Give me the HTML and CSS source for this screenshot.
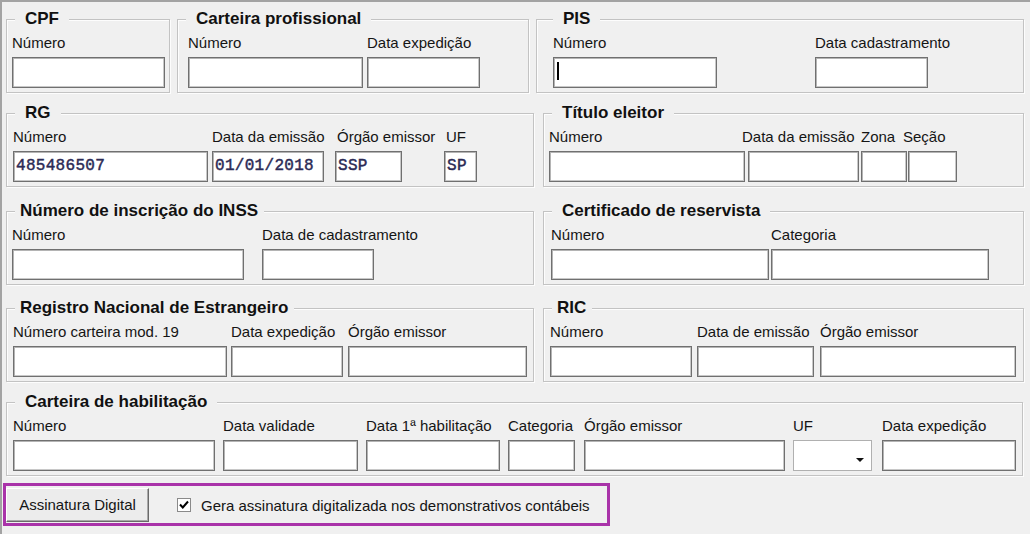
FILE: index.html
```html
<!DOCTYPE html>
<html lang="pt-BR">
<head>
<meta charset="utf-8">
<title>Documentos</title>
<link rel="stylesheet" href="styles.css">
</head>
<body>
<div class="frame">
  <div class="row row-1">
    <section class="group">
      <h3 class="title">CPF</h3>
      <div class="fields">
        <div class="field ml5 w153"><label>Número</label><div class="tb"></div></div>
      </div>
    </section>
    <section class="group">
      <h3 class="title">Carteira profissional</h3>
      <div class="fields">
        <div class="field ml10 w175"><label>Número</label><div class="tb"></div></div>
        <div class="field ml4 w113"><label>Data expedição</label><div class="tb"></div></div>
      </div>
    </section>
    <section class="group">
      <h3 class="title title-pis">PIS</h3>
      <div class="fields">
        <div class="field ml16 w164"><label>Número</label><div class="tb"><span class="caret"></span></div></div>
        <div class="field ml98 w113"><label>Data cadastramento</label><div class="tb"></div></div>
      </div>
    </section>
  </div>

  <div class="row row-2">
    <section class="group">
      <h3 class="title">RG</h3>
      <div class="fields">
        <div class="field ml6 w195"><label>Número</label><div class="tb val">485486507</div></div>
        <div class="field ml4 w112"><label>Data da emissão</label><div class="tb val">01/01/2018</div></div>
        <div class="field ml11 w67"><label class="lp2">Órgão emissor</label><div class="tb val">SSP</div></div>
        <div class="field ml42 w33"><label class="lp2">UF</label><div class="tb val">SP</div></div>
      </div>
    </section>
    <section class="group">
      <h3 class="title">Título eleitor</h3>
      <div class="fields">
        <div class="field ml5 w196"><label>Número</label><div class="tb"></div></div>
        <div class="field ml3 w111"><label class="ls6">Data da emissão</label><div class="tb"></div></div>
        <div class="field ml2 w46"><label>Zona</label><div class="tb"></div></div>
        <div class="field ml1 w49"><label class="ls5">Seção</label><div class="tb"></div></div>
      </div>
    </section>
  </div>

  <div class="row row-3">
    <section class="group">
      <h3 class="title tight">Número de inscrição do INSS</h3>
      <div class="fields">
        <div class="field ml5 w232"><label>Número</label><div class="tb"></div></div>
        <div class="field ml18 w112"><label>Data de cadastramento</label><div class="tb"></div></div>
      </div>
    </section>
    <section class="group">
      <h3 class="title">Certificado de reservista</h3>
      <div class="fields">
        <div class="field ml7 w218"><label>Número</label><div class="tb"></div></div>
        <div class="field ml2 w218"><label>Categoria</label><div class="tb"></div></div>
      </div>
    </section>
  </div>

  <div class="row row-4">
    <section class="group">
      <h3 class="title tight">Registro Nacional de Estrangeiro</h3>
      <div class="fields">
        <div class="field ml6 w214"><label>Número carteira mod. 19</label><div class="tb"></div></div>
        <div class="field ml4 w112"><label>Data expedição</label><div class="tb"></div></div>
        <div class="field ml5 w179"><label>Órgão emissor</label><div class="tb"></div></div>
      </div>
    </section>
    <section class="group">
      <h3 class="title tight">RIC</h3>
      <div class="fields">
        <div class="field ml6 w142"><label>Número</label><div class="tb"></div></div>
        <div class="field ml5 w117"><label>Data de emissão</label><div class="tb"></div></div>
        <div class="field ml6 w196"><label>Órgão emissor</label><div class="tb"></div></div>
      </div>
    </section>
  </div>

  <div class="row row-5">
    <section class="group">
      <h3 class="title">Carteira de habilitação</h3>
      <div class="fields">
        <div class="field ml6 w202"><label>Número</label><div class="tb"></div></div>
        <div class="field ml8 w135"><label>Data validade</label><div class="tb"></div></div>
        <div class="field ml8 w134"><label>Data 1ª habilitação</label><div class="tb"></div></div>
        <div class="field ml8 w67"><label>Categoria</label><div class="tb"></div></div>
        <div class="field ml9 w201"><label>Órgão emissor</label><div class="tb"></div></div>
        <div class="field ml8 w79"><label>UF</label><div class="sel"><span class="arrow"></span></div></div>
        <div class="field ml10 w134"><label>Data expedição</label><div class="tb"></div></div>
      </div>
    </section>
  </div>

  <div class="sign">
    <div class="btn">Assinatura Digital</div>
    <div class="check">
      <span class="cb"><svg width="12" height="12" viewBox="0 0 12 12"><polyline points="2,5.5 4.8,8.5 10,2.5" fill="none" stroke="#000" stroke-width="2"/></svg></span>
      <span class="cb-text">Gera assinatura digitalizada nos demonstrativos contábeis</span>
    </div>
  </div>
</div>
</body>
</html>
```
FILE: styles.css
```css
* { box-sizing: border-box; }
html, body { margin: 0; padding: 0; }
body {
  background: #f0f0f0;
  font-family: "Liberation Sans", Arial, sans-serif;
  font-size: 15px;
  color: #151515;
  width: 1030px;
  height: 534px;
  overflow: hidden;
}
.frame {
  height: 534px;
  border-top: 2px solid #a3a3a3;
  border-left: 2px solid #a3a3a3;
  padding-left: 4px;
}
.row { display: grid; }
.row-1 { grid-template-columns: 164px 352px 488px; column-gap: 7px; margin-top: 17px; }
.row-2 { grid-template-columns: 528px 481px; column-gap: 9px; margin-top: 20px; }
.row-3 { grid-template-columns: 528px 481px; column-gap: 9px; margin-top: 24px; }
.row-4 { grid-template-columns: 528px 481px; column-gap: 9px; margin-top: 23px; }
.row-5 { grid-template-columns: 1017px; margin-top: 20px; }

.group {
  position: relative;
  height: 74px;
  border: 1px solid #c3c3c3;
  box-shadow: inset 1px 1px 0 #fdfdfd, 1px 1px 0 #fdfdfd;
  padding-top: 14px;
}
.title {
  position: absolute;
  top: -11px;
  left: 8px;
  margin: 0;
  padding: 0 10px;
  background: #f0f0f0;
  font-size: 17px;
  line-height: 20px;
  font-weight: bold;
  color: #111;
  white-space: nowrap;
}
.title.tight { padding: 0 6px 0 5px; }
.title.title-pis { left: 16px; }

.fields { display: flex; align-items: flex-start; }
.field { flex: none; }
.field label {
  display: block;
  height: 17px;
  line-height: 17px;
  margin-bottom: 6px;
  white-space: nowrap;
}
.field label.ls6 { margin-left: -6px; }
.field label.ls5 { margin-left: -5px; }
.field label.lp2 { padding-left: 2px; }

.tb {
  height: 31px;
  background: #fff;
  border: 1px solid #707070;
  box-shadow: inset 1px 1px 0 #b4b4b4, inset -1px -1px 0 #c8c8c8;
  padding: 0 2px;
}
.tb.val {
  font-family: "Liberation Mono", "Courier New", monospace;
  font-size: 16px;
  line-height: 28px;
  color: #2b2a55;
  -webkit-text-stroke: 0.45px #2b2a55;
  letter-spacing: 0.3px;
  white-space: nowrap;
  overflow: hidden;
}
.caret {
  display: block;
  width: 2px;
  height: 18px;
  margin: 4px 0 0 1px;
  background: #000;
}
.sel {
  height: 31px;
  background: #fff;
  border: 1px solid #b0b0b0;
  display: flex;
  justify-content: flex-end;
  align-items: center;
  padding: 9px 7px 0 0;
}
.arrow {
  width: 0;
  height: 0;
  border-left: 4px solid transparent;
  border-right: 4px solid transparent;
  border-top: 4px solid #111;
}

.w33 { width: 33px; } .w46 { width: 46px; } .w49 { width: 49px; } .w67 { width: 67px; }
.w79 { width: 79px; } .w111 { width: 111px; } .w112 { width: 112px; } .w113 { width: 113px; }
.w117 { width: 117px; } .w134 { width: 134px; } .w135 { width: 135px; } .w142 { width: 142px; }
.w153 { width: 153px; } .w164 { width: 164px; } .w175 { width: 175px; } .w179 { width: 179px; }
.w195 { width: 195px; } .w196 { width: 196px; } .w201 { width: 201px; } .w202 { width: 202px; }
.w214 { width: 214px; } .w218 { width: 218px; } .w232 { width: 232px; }
.ml1 { margin-left: 1px; } .ml2 { margin-left: 2px; } .ml3 { margin-left: 3px; } .ml4 { margin-left: 4px; }
.ml5 { margin-left: 5px; } .ml6 { margin-left: 6px; } .ml7 { margin-left: 7px; } .ml8 { margin-left: 8px; }
.ml9 { margin-left: 9px; } .ml10 { margin-left: 10px; } .ml11 { margin-left: 11px; } .ml16 { margin-left: 16px; }
.ml18 { margin-left: 18px; } .ml42 { margin-left: 42px; } .ml98 { margin-left: 98px; }

.sign {
  margin: 7px 0 0 -3px;
  width: 607px;
  height: 43px;
  border: 3px solid #a933a9;
  display: flex;
  align-items: flex-start;
  padding-top: 2px;
}
.btn {
  flex: none;
  width: 143px;
  height: 34px;
  background: #ececec;
  border: 1px solid;
  border-color: #ffffff #6a6a6a #6a6a6a #ffffff;
  box-shadow: inset -1px -1px 0 #a9a9a9;
  text-align: center;
  line-height: 31px;
  color: #151515;
}
.check {
  display: flex;
  align-items: center;
  height: 34px;
  margin-left: 28px;
}
.cb {
  width: 14px;
  height: 14px;
  background: #fff;
  border: 1px solid #8a8a8a;
  display: flex;
  align-items: center;
  justify-content: center;
}
.cb svg { display: block; }
.cb-text { margin-left: 10px; white-space: nowrap; }
```
